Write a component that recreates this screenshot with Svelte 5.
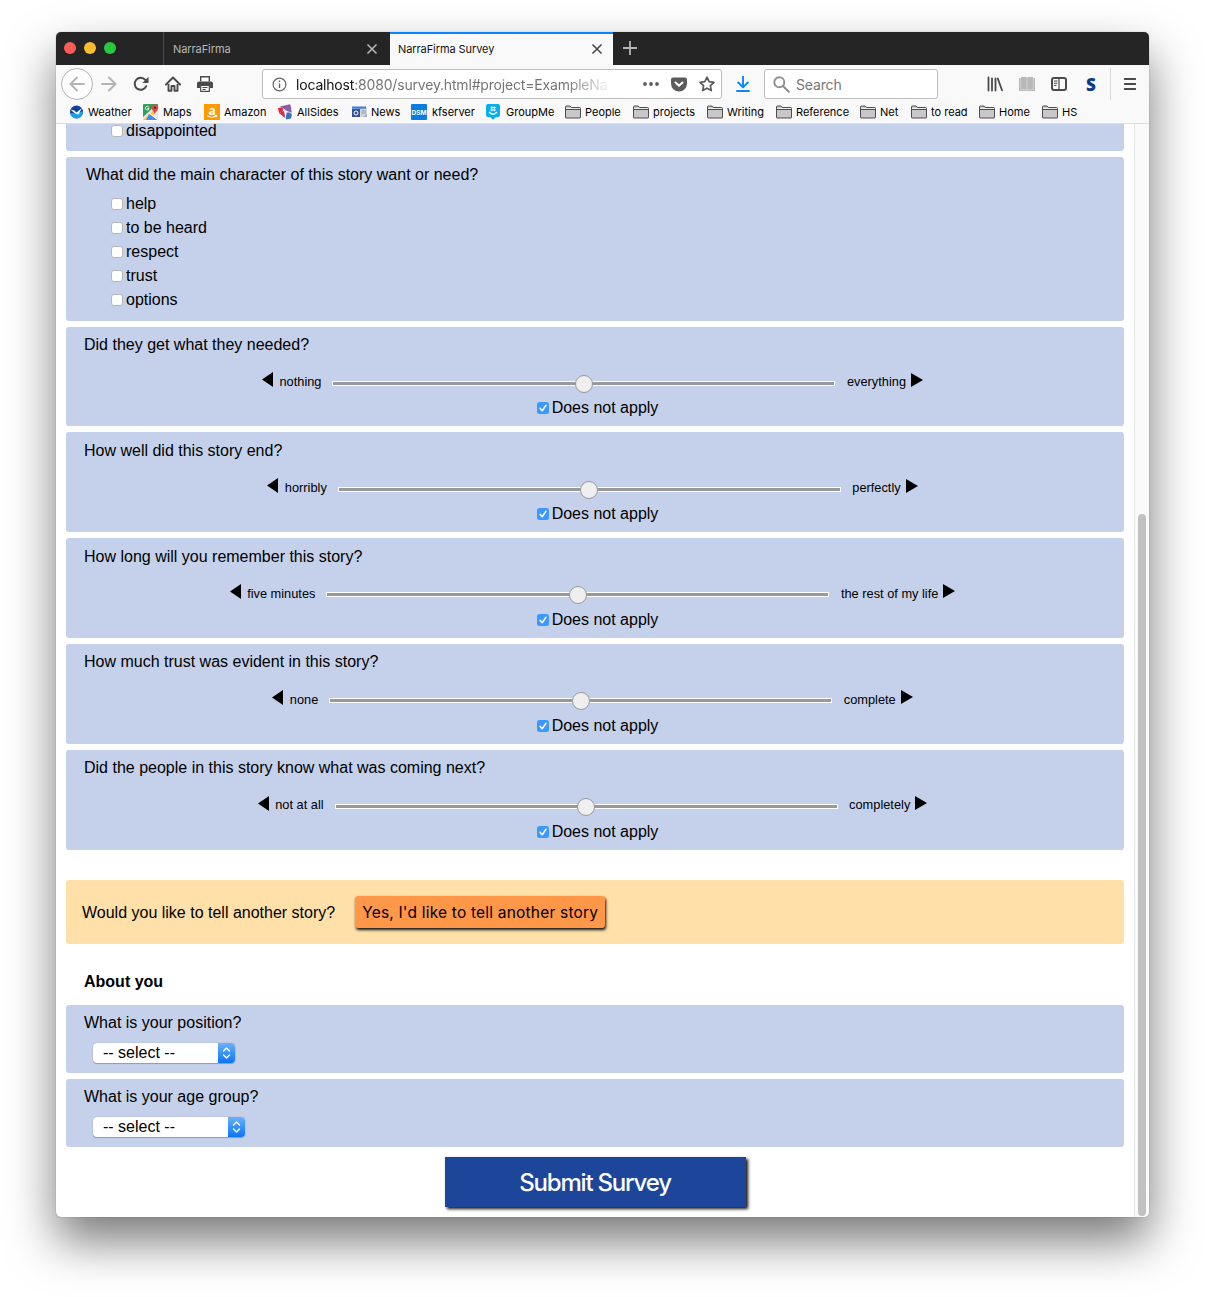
<script>
  const bookmarks = [
    { label: 'Weather', icon: 'weather', w: 73, gap: 2 },
    { label: 'Maps', icon: 'maps', w: 61, gap: 4 },
    { label: 'Amazon', icon: 'amazon', w: 74 },
    { label: 'AllSides', icon: 'allsides', w: 74, gap: 3 },
    { label: 'News', icon: 'news', w: 59, gap: 3 },
    { label: 'kfserver', icon: 'dsm', w: 75, gap: 5 },
    { label: 'GroupMe', icon: 'groupme', w: 79 },
    { label: 'People', w: 68 },
    { label: 'projects', w: 74 },
    { label: 'Writing', w: 69 },
    { label: 'Reference', w: 84 },
    { label: 'Net', w: 51 },
    { label: 'to read', w: 68 },
    { label: 'Home', w: 63 },
    { label: 'HS', w: 50 },
  ];
  const needs = ['help', 'to be heard', 'respect', 'trust', 'options'];
  const sliders = [
    { q: 'Did they get what they needed?', lo: 'nothing', hi: 'everything' },
    { q: 'How well did this story end?', lo: 'horribly', hi: 'perfectly' },
    { q: 'How long will you remember this story?', lo: 'five minutes', hi: 'the rest of my life' },
    { q: 'How much trust was evident in this story?', lo: 'none', hi: 'complete' },
    { q: 'Did the people in this story know what was coming next?', lo: 'not at all', hi: 'completely' },
  ];
  const selects = [
    { q: 'What is your position?', w: 142 },
    { q: 'What is your age group?', w: 152 },
  ];
</script>

<div class="window">
  <div class="tabs">
    <div class="lights"><i class="red"></i><i class="yellow"></i><i class="green"></i></div>
    <div class="tab">
      <span>NarraFirma</span>
      <svg width="12" height="12" viewBox="0 0 12 12"><path d="M1.500 1.500l9 9m0-9l-9 9" stroke="#b5b5b5" stroke-width="1.600" /></svg>
    </div>
    <div class="tab active">
      <span>NarraFirma Survey</span>
      <svg width="12" height="12" viewBox="0 0 12 12"><path d="M1.500 1.500l9 9m0-9l-9 9" stroke="#4a4a4a" stroke-width="1.600" /></svg>
    </div>
    <svg class="plus" width="14" height="14" viewBox="0 0 14 14"><path d="M7 0v14M0 7h14" stroke="#b5b5b5" stroke-width="1.800" /></svg>
  </div>

  <div class="toolbar">
    <div class="cell back"><svg width="16" height="16" viewBox="0 0 16 16"><path d="M15 8H1.500M8 1.500L1.500 8 8 14.500" fill="none" stroke="#b3b3b3" stroke-width="1.900" stroke-linecap="round" stroke-linejoin="round" /></svg></div>
    <div class="cell"><svg width="16" height="16" viewBox="0 0 16 16"><path d="M1 8h13.500M8 1.500L14.500 8 8 14.500" fill="none" stroke="#b3b3b3" stroke-width="1.900" stroke-linecap="round" stroke-linejoin="round" /></svg></div>
    <div class="cell"><svg width="16" height="16" viewBox="0 0 16 16"><path d="M13.200 10.200A6 6 0 1 1 12.300 3.900" fill="none" stroke="#4a4a4a" stroke-width="2" stroke-linecap="round" /><path d="M15.500 .8v6.200H9.300z" fill="#4a4a4a" /></svg></div>
    <div class="cell"><svg width="16" height="16" viewBox="0 0 16 16"><path d="M1 8.500L8 1.500l7 7" fill="none" stroke="#4a4a4a" stroke-width="2" stroke-linecap="round" stroke-linejoin="round" /><path d="M3.500 8v6.800h3V10h3v4.800h3V8" fill="none" stroke="#4a4a4a" stroke-width="1.900" stroke-linejoin="round" /></svg></div>
    <div class="cell"><svg width="16" height="16" viewBox="0 0 16 16"><path d="M3.700 5.500V.7h8.600v4.800" fill="#fff" stroke="#4a4a4a" stroke-width="1.400" /><path d="M2 5.500h12a2 2 0 0 1 2 2V12h-3V9.500H3V12H0V7.500a2 2 0 0 1 2-2z" fill="#4a4a4a" /><path d="M3.700 9.500h8.600v5.800H3.700zM5.500 11.500h5M5.500 13.500h3" fill="#fff" stroke="#4a4a4a" stroke-width="1.200" /></svg></div>

    <div class="urlbox">
      <svg width="15" height="15" viewBox="0 0 15 15"><circle cx="7.500" cy="7.500" r="6.400" fill="none" stroke="#666" stroke-width="1.200" /><path d="M7.500 6.500v4.500M7.500 3.600v1.500" stroke="#666" stroke-width="1.400" /></svg>
      <div class="url"><b>localhost</b>:8080/survey.html#project=ExampleNa</div>
      <svg class="dots" width="16" height="4" viewBox="0 0 16 4"><g fill="#5c5c5c"><circle cx="2" cy="2" r="1.900" /><circle cx="8" cy="2" r="1.900" /><circle cx="14" cy="2" r="1.900" /></g></svg>
      <svg class="pocket" width="16" height="15" viewBox="0 0 16 15"><path d="M2 .5h12a2 2 0 0 1 2 2v4a8 8 0 0 1-16 0v-4a2 2 0 0 1 2-2z" fill="#5c5c5c" /><path d="M4.500 5.500L8 8.800l3.500-3.300" fill="none" stroke="#fff" stroke-width="2" stroke-linecap="round" stroke-linejoin="round" /></svg>
      <svg width="16" height="16" viewBox="0 0 16 16"><path d="M8 1.200l2.100 4.500 4.900.6-3.600 3.400.9 4.900L8 12.200l-4.300 2.400.9-4.900L1 6.300l4.900-.6z" fill="none" stroke="#5c5c5c" stroke-width="1.700" stroke-linejoin="round" /></svg>
    </div>

    <div class="download"><svg width="14" height="16" viewBox="0 0 14 16"><path d="M7 .5v10.500M2.200 6.500L7 11.300l4.800-4.800M1 15h12" fill="none" stroke="#0a84ff" stroke-width="1.900" stroke-linecap="round" stroke-linejoin="round" /></svg></div>

    <div class="search">
      <svg width="17" height="17" viewBox="0 0 17 17"><circle cx="6.300" cy="6.300" r="5" fill="none" stroke="#8f8f8f" stroke-width="1.900" /><path d="M10 10l5.700 5.700" stroke="#8f8f8f" stroke-width="2" stroke-linecap="round" /></svg>
      <span>Search</span>
    </div>

    <div class="cell first"><svg width="16" height="16" viewBox="0 0 16 16"><path d="M1.500 1.500v13M5 2.500v12M8.500 2.500v12M10.800 2.500L15 14.300" stroke="#4a4a4a" stroke-width="1.800" stroke-linecap="round" /></svg></div>
    <div class="cell"><svg width="16" height="14" viewBox="0 0 16 14"><path d="M0 1h2V0h5.300l.7.700.7-.7H14v1h2v13H0z" fill="#b8b8b8" /><path d="M1.700 1v11.600h12.600V1M8 0v14" fill="none" stroke="#dcdcdc" stroke-width=".7" /></svg></div>
    <div class="cell"><svg width="16" height="14" viewBox="0 0 16 14"><rect x="1" y="1" width="14" height="12" rx="2" fill="none" stroke="#4a4a4a" stroke-width="2" /><path d="M8 1v12" stroke="#4a4a4a" stroke-width="1.200" /><path d="M3 4h3.500M3 6.200h3.500M3 8.400h2.500" stroke="#4a4a4a" /></svg></div>
    <div class="cell sletter">S</div>
    <div class="divider"></div>
    <div class="cell menu"><svg width="12" height="12" viewBox="0 0 12 12"><path d="M.5 1h11M.5 6h11M.5 11h11" stroke="#4a4a4a" stroke-width="1.800" stroke-linecap="round" /></svg></div>
  </div>

  <div class="bookmarks">
    {#each bookmarks as b}
      <div class="bm" style:width="{b.w}px" style:gap="{b.gap ?? 4}px">
        <svg width="16" height="16" viewBox="0 0 16 16">
          {#if b.icon === 'weather'}
            <circle cx="6.500" cy="8" r="6.500" fill="#0a3f9c" /><path d="M.2 9.500Q3 8.500 5.500 10 9 7 13 7.500A6.500 6.500 0 0 1 .2 9.500z" fill="#1ba3e6" /><path d="M.3 5.500l4 1L6.500 8.500 12 4 8.500 10.500 5 9.500z" fill="#fff" />
          {:else if b.icon === 'maps'}
            <rect width="15" height="16" rx="1" fill="#2da05a" /><path d="M0 13L12 2l3 2v12H0z" fill="#e5e5e5" /><path d="M0 16L13 4l2 2-9.500 10z" fill="#fcc934" /><path d="M6 10l9 6H3z" fill="#4a8af4" /><path d="M6.500 9L15 16" stroke="#fff" /><path d="M11.800 10.500C11.500 7.500 8.500 6.500 8.500 3.800a3.400 3.400 0 0 1 6.800 0c0 2.700-3.200 3.700-3.500 6.700z" fill="#e04a3c" /><circle cx="11.900" cy="3.700" r="1.200" fill="#7b231d" /><path d="M5.600 2.900A1.800 1.800 0 1 0 6 4.300H4.500" fill="none" stroke="#fff" />
          {:else if b.icon === 'amazon'}
            <rect width="16" height="16" fill="#ff9900" /><text x="8" y="10.800" class="ama">a</text><path d="M3 11.800q5 3 9.500.3M11 11.600l2-.2-.5 1.800" fill="none" stroke="#fff" />
          {:else if b.icon === 'allsides'}
            <path d="M2 2.500L12 .3 13.500 5 8 7z" fill="#8b5aa8" /><path d="M12 1l2 8-3 1-3-4z" fill="#8060ad" /><path d="M0 4l6-1-1.500 5L1 9z" fill="#e32c3a" /><path d="M1 9l5-2 1.500 7.500z" fill="#cf3249" /><path d="M8 8l6 2-1 4.500-5 1z" fill="#3672b8" /><path d="M4.500 4L9 7.500l-2 6M9 7.500L14 9" fill="none" stroke="#fff" stroke-width=".7" />
          {:else if b.icon === 'news'}
            <rect x="4" y="4" width="11" height="9" fill="#d3d5da" /><path d="M0 2.500h14v2.300H0z" fill="#3f7be0" /><rect y="5" width="8" height="8" fill="#38509a" /><circle cx="4" cy="9" r="2" fill="none" stroke="#fff" /><path d="M9.500 7H14M9.500 9H14" stroke="#8d96a9" /><path d="M11 13h4v-3z" fill="#aaa" />
          {:else if b.icon === 'dsm'}
            <rect width="16" height="16" rx="1" fill="#0a7de0" /><text x="8" y="10.600" class="dsm">DSM</text>
          {:else if b.icon === 'groupme'}
            <path d="M2 0h10a2 2 0 0 1 2 2v9a2 2 0 0 1-2 2h-2l-3 2.700L4 13H2a2 2 0 0 1-2-2V2a2 2 0 0 1 2-2z" fill="#08aef0" /><path d="M5.800 2.300v5M8.400 2.300v5M4.500 3.600h5.200M4.500 6h5.200" stroke="#fff" stroke-width=".9" /><path d="M3 8q4 4.500 8 0" fill="none" stroke="#fff" stroke-width="1.300" />
          {:else}
            <path d="M.5 3a1 1 0 0 1 1-1h3.700l1.300 1.500h8a1 1 0 0 1 1 1V13.500a.5.500 0 0 1-.5.500H1a.5.500 0 0 1-.5-.5z" fill="#c9c7c9" stroke="#4d4b4d" /><path d="M1 5.500h14" stroke="#4d4b4d" /><path d="M1 4.500h14" stroke="#eee" />
          {/if}
        </svg>
        <span>{b.label}</span>
      </div>
    {/each}
  </div>

  <div class="viewport">
    <main>
      <section class="panel cut"><div class="opt"><i class="box"></i>disappointed</div></section>

      <section class="panel needs">
        <p>What did the main character of this story want or need?</p>
        {#each needs as n}<div class="opt"><i class="box"></i>{n}</div>{/each}
      </section>

      {#each sliders as s}
        <section class="panel slide">
          <p>{s.q}</p>
          <div class="range">
            <svg class="tri" width="11" height="15" viewBox="0 0 11 15"><path d="M11 0v15L0 7.500z" /></svg>
            <span class="lo">{s.lo}</span>
            <div class="track"><div class="thumb"></div></div>
            <span class="hi">{s.hi}</span>
            <svg class="tri" width="12" height="14" viewBox="0 0 12 14"><path d="M0 0v14l12-7z" /></svg>
          </div>
          <div class="na">
            <svg width="12" height="12" viewBox="0 0 12 12"><rect width="12" height="12" rx="2.500" fill="#3b99fc" /><path d="M3 6.300l2.200 2.400L9 3.200" fill="none" stroke="#fff" stroke-width="1.500" stroke-linecap="round" stroke-linejoin="round" /></svg>
            <span>Does not apply</span>
          </div>
        </section>
      {/each}

      <section class="again">
        <span>Would you like to tell another story?</span>
        <button>Yes, I'd like to tell another story</button>
      </section>

      <h3>About you</h3>

      {#each selects as s}
        <section class="panel pick">
          <p>{s.q}</p>
          <div class="select" style:width="{s.w}px">
            <span>-- select --</span>
            <div class="arrows"><svg width="9" height="12" viewBox="0 0 9 12"><path d="M1.500 4l3-3 3 3M1.500 8l3 3 3-3" fill="none" stroke="#fff" stroke-width="1.400" stroke-linecap="round" stroke-linejoin="round" /></svg></div>
          </div>
        </section>
      {/each}

      <button class="submit">Submit Survey</button>
    </main>
    <div class="scroll"><div class="bar"></div></div>
  </div>
</div>

<style>
  :global(body) { background: #fff; overflow: hidden; }
  :global(#app) { height: 1297px; padding: 32px 56px 80px; box-sizing: border-box; }
  * { box-sizing: border-box; }
  svg { display: block; flex: none; }
  .window {
    width: 1093px; height: 1185px; border-radius: 5px; overflow: hidden; background: #fff;
    display: flex; flex-direction: column;
    box-shadow: 0 0 1px rgba(0, 0, 0, .5), 0 24px 48px rgba(0, 0, 0, .53);
    font-family: Inter, "Liberation Sans", sans-serif;
  }
  .tabs { height: 33px; flex: none; background: #252525; display: flex; align-items: center; font-size: 11px; }
  .lights { width: 108px; height: 33px; border-right: 1px solid #4b4b4b; display: flex; gap: 8px; align-items: center; padding: 0 0 2px 8px; }
  .lights i { width: 12px; height: 12px; border-radius: 50%; }
  .red { background: #fc5b57; }
  .yellow { background: #fdbc2e; }
  .green { background: #27c93f; }
  .tab { width: 226px; height: 33px; display: flex; align-items: center; justify-content: space-between; padding: 1px 12px 0 9px; color: #b8b8b8; letter-spacing: -.08px; }
  .tab.active { width: 223px; padding: 0 10px 1px 8px; background: #f9f9fa; border-top: 2px solid #0a84ff; color: #111; }
  .plus { margin: 0 0 2px 10px; }

  .toolbar { height: 38px; flex: none; background: #f9f9fa; display: flex; align-items: center; padding-left: 5px; }
  .cell { width: 32px; height: 32px; display: flex; align-items: center; justify-content: center; flex: none; }
  .back { border: 1px solid #b5b5b5; border-radius: 50%; background: #fdfdfd; }
  .urlbox { margin-left: 41px; width: 460px; height: 30px; border: 1px solid #bdbdbd; border-radius: 3px; background: #fff; display: flex; align-items: center; padding: 0 6px 0 9px; }
  .url { width: 314px; margin: 1px 0 0 9px; white-space: nowrap; font-size: 14px; line-height: 20px; color: #757575; letter-spacing: -.18px; mask-image: linear-gradient(90deg, #000 270px, transparent 316px); }
  .url b { font-weight: 400; color: #111; }
  .dots { margin-left: 33px; }
  .pocket { margin: 0 12px; }
  .download { width: 42px; display: flex; justify-content: center; }
  .search { width: 174px; height: 30px; border: 1px solid #bdbdbd; border-radius: 3px; background: #fff; display: flex; align-items: center; padding-left: 8px; gap: 6px; font-size: 14px; color: #757575; }
  .search span { margin-top: 1px; letter-spacing: -.15px; }
  .first { margin-left: 41px; }
  .sletter { font-family: "Open Sans", sans-serif; font-weight: 800; font-size: 17px; color: #0c3b8c; }
  .divider { width: 1px; height: 32px; background: #d9d9d9; margin: 0 3px; }

  .bookmarks { height: 21px; flex: none; background: #f9f9fa; border-bottom: 1px solid #dedede; display: flex; align-items: center; padding: 0 0 2px 14px; font-size: 11px; color: #000; }
  .bm { display: flex; align-items: center; flex: none; white-space: nowrap; }
  .ama { font: bold 12px "Open Sans", sans-serif; fill: #fff; text-anchor: middle; }
  .dsm { font: bold 6.500px Inter, sans-serif; fill: #fff; text-anchor: middle; }

  .viewport { flex: 1; display: flex; overflow: hidden; }
  main { flex: 1; padding: 0 10px; font: 16px/18px "Liberation Sans", Arial, sans-serif; color: #000; display: flex; flex-direction: column; }
  p { margin: 0; }
  .panel { background: #c5d1eb; border-radius: 3px; margin-bottom: 6px; flex: none; }
  .cut { height: 27px; border-radius: 0 0 3px 3px; }
  .cut .opt { margin-top: -5px; }
  .opt { display: flex; align-items: center; height: 24px; padding-left: 45px; }
  .box { width: 12px; height: 12px; background: #fff; border: 1px solid #b6b6b6; border-radius: 3px; margin: 0 3px 1px 0; }
  .needs { height: 164px; }
  .needs p { padding: 9px 0 8px 20px; }
  .slide { height: 99.800px; padding-top: 9.350px; }
  .needs + .slide { margin-top: -.35px; }
  .slide p { padding-left: 18px; }
  .range { display: flex; align-items: center; justify-content: center; padding-right: 5px; height: 36px; margin-top: 9.400px; font-size: 12.800px; }
  .tri { margin-top: -3px; }
  .lo { margin: 1.500px 11px 0 6.500px; }
  .hi { margin: 1.500px 5px 0 11.500px; }
  .track { width: 503px; height: 5px; margin-top: 4px; background: #999; border: 1px solid #fff; display: flex; align-items: center; justify-content: center; }
  .thumb { width: 18px; height: 18px; flex: none; border-radius: 50%; background: #efefef; border: 1px solid #999; margin-top: 1px; }
  .na { display: flex; align-items: center; justify-content: center; gap: 3px; padding-left: 5px; }
  .again { height: 64px; flex: none; background: #ffe0a8; border-radius: 3px; margin-top: 24px; display: flex; align-items: center; padding: 1px 0 0 16px; gap: 20px; }
  .again span { margin-top: 1px; }
  button { border: 0; padding: 0; font: inherit; color: inherit; }
  .again button { width: 250px; height: 32px; border-radius: 3px; background: #ff9749; box-shadow: 1px 2px 3px #111; font: 15.500px Inter, sans-serif; letter-spacing: .2px; white-space: nowrap; }
  h3 { margin: 29px 0 14px 18px; font-size: 16px; line-height: 18px; }
  .pick { height: 68px; padding: 9px 0 0 18px; }
  .select { height: 20px; margin: 11px 0 0 9px; background: #fff; border-radius: 4px; display: flex; justify-content: space-between; overflow: hidden; padding-left: 10px; line-height: 19px; box-shadow: 0 0 1px #777, 0 1px 1px rgba(0, 0, 0, .25); }
  .arrows { width: 17px; background: linear-gradient(#6ab1fb, #0a75fb); display: flex; align-items: center; justify-content: center; }
  .submit { width: 301px; height: 50px; flex: none; align-self: center; margin-top: 4px; padding-top: 2px; background: #1d469a; color: #fff; font: 500 24px Inter, sans-serif; letter-spacing: -1.200px; box-shadow: 2px 2px 3px #111; }
  .scroll { width: 15px; flex: none; background: #fafafa; border-left: 1px solid #e6e6e6; display: flex; justify-content: center; align-items: flex-end; }
  .bar { width: 8px; height: 702px; border-radius: 4px; background: #c1c1c1; margin-bottom: 1px; }
</style>
